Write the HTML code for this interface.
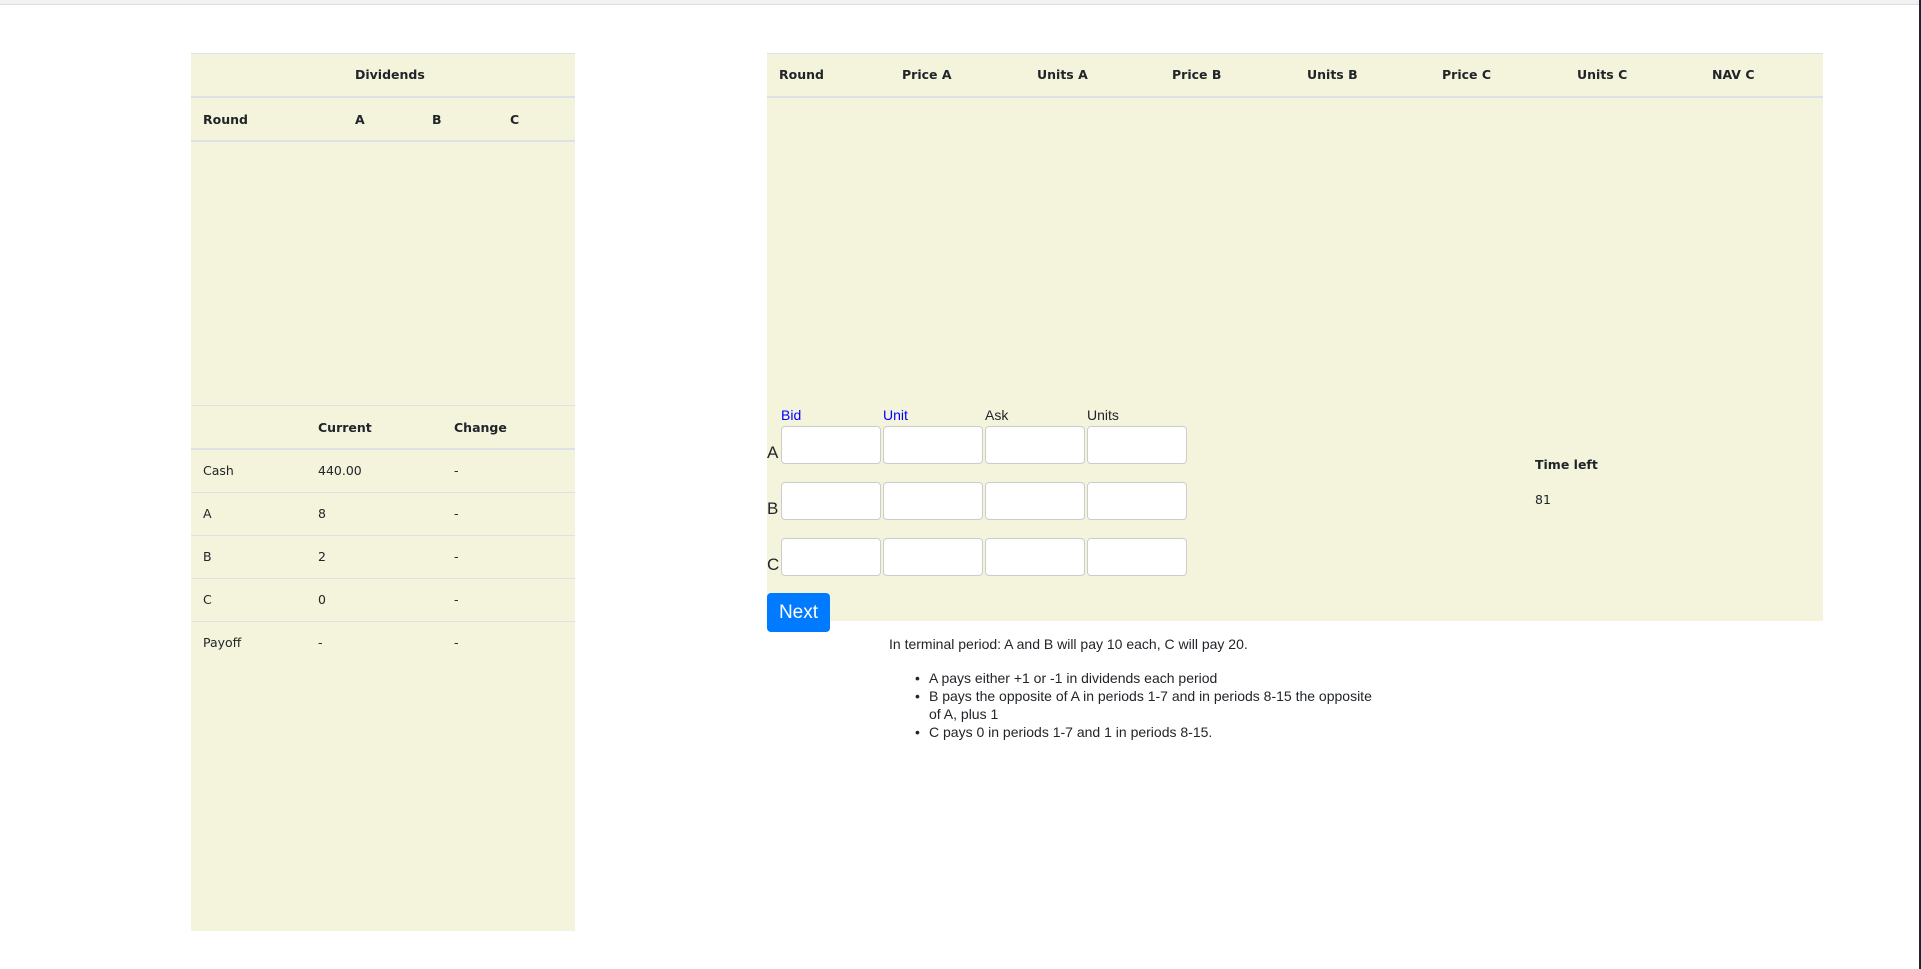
<!DOCTYPE html>
<html><head><meta charset="utf-8"><style>
*{margin:0;padding:0;box-sizing:border-box}
body{width:1921px;height:969px;position:relative;background:#fff;overflow:hidden;font-family:"DejaVu Sans","Liberation Sans",sans-serif;color:#212529}
.a{position:absolute;white-space:nowrap}
.bg{position:absolute;background:#f4f4dc}
.hl{position:absolute;height:2px;background:#dee2e6}
.tl{position:absolute;height:1px;background:#dee2e6}
.b{font-weight:bold;font-size:12.5px}
.t{font-size:12.5px}
.in{position:absolute;width:100px;height:38px;background:#fff;border:1px solid #ccc;border-radius:4px}
.lab{font-family:"Liberation Sans",sans-serif;font-size:14px}
.txt{font-family:"Liberation Sans",sans-serif;font-size:14px}
</style></head><body>
<div class="a" style="left:0;top:0;width:1921px;height:5px;background:#f2f2f2;border-bottom:1px solid #ddd"></div>
<div class="a" style="left:1919px;top:0;width:2px;height:969px;background:#1c2733"></div>

<div class="bg" style="left:191px;top:53px;width:384px;height:878px"></div>
<div class="tl" style="left:191px;top:53px;width:384px"></div>
<div class="a b" style="left:355px;top:67px">Dividends</div>
<div class="hl" style="left:191px;top:96px;width:384px"></div>
<div class="a b" style="left:203px;top:112px">Round</div>
<div class="a b" style="left:355px;top:112px">A</div>
<div class="a b" style="left:432px;top:112px">B</div>
<div class="a b" style="left:510px;top:112px">C</div>
<div class="hl" style="left:191px;top:140px;width:384px"></div>
<div class="tl" style="left:191px;top:405px;width:384px"></div>
<div class="a b" style="left:318px;top:420px">Current</div>
<div class="a b" style="left:454px;top:420px">Change</div>
<div class="hl" style="left:191px;top:448px;width:384px"></div>
<div class="a t" style="left:203px;top:463px">Cash</div><div class="a t" style="left:318px;top:463px">440.00</div><div class="a t" style="left:454px;top:463px">-</div>
<div class="tl" style="left:191px;top:492px;width:384px"></div>
<div class="a t" style="left:203px;top:506px">A</div><div class="a t" style="left:318px;top:506px">8</div><div class="a t" style="left:454px;top:506px">-</div>
<div class="tl" style="left:191px;top:535px;width:384px"></div>
<div class="a t" style="left:203px;top:549px">B</div><div class="a t" style="left:318px;top:549px">2</div><div class="a t" style="left:454px;top:549px">-</div>
<div class="tl" style="left:191px;top:578px;width:384px"></div>
<div class="a t" style="left:203px;top:592px">C</div><div class="a t" style="left:318px;top:592px">0</div><div class="a t" style="left:454px;top:592px">-</div>
<div class="tl" style="left:191px;top:621px;width:384px"></div>
<div class="a t" style="left:203px;top:635px">Payoff</div><div class="a t" style="left:318px;top:635px">-</div><div class="a t" style="left:454px;top:635px">-</div>

<div class="bg" style="left:767px;top:53px;width:1056px;height:568px"></div>
<div class="tl" style="left:767px;top:53px;width:1056px"></div>
<div class="a b" style="left:779px;top:67px">Round</div>
<div class="a b" style="left:902px;top:67px">Price A</div>
<div class="a b" style="left:1037px;top:67px">Units A</div>
<div class="a b" style="left:1172px;top:67px">Price B</div>
<div class="a b" style="left:1307px;top:67px">Units B</div>
<div class="a b" style="left:1442px;top:67px">Price C</div>
<div class="a b" style="left:1577px;top:67px">Units C</div>
<div class="a b" style="left:1712px;top:67px">NAV C</div>
<div class="hl" style="left:767px;top:96px;width:1056px"></div>

<div class="a lab" style="left:781px;top:407px;color:#00f">Bid</div>
<div class="a lab" style="left:883px;top:407px;color:#00f">Unit</div>
<div class="a lab" style="left:985px;top:407px">Ask</div>
<div class="a lab" style="left:1087px;top:407px">Units</div>
<div class="a" style="left:767px;top:443px;font-family:'Liberation Sans',sans-serif;font-size:17px">A</div>
<div class="a" style="left:767px;top:499px;font-family:'Liberation Sans',sans-serif;font-size:17px">B</div>
<div class="a" style="left:767px;top:555px;font-family:'Liberation Sans',sans-serif;font-size:17px">C</div>
<div class="in" style="left:781px;top:426px"></div><div class="in" style="left:883px;top:426px"></div><div class="in" style="left:985px;top:426px"></div><div class="in" style="left:1087px;top:426px"></div>
<div class="in" style="left:781px;top:482px"></div><div class="in" style="left:883px;top:482px"></div><div class="in" style="left:985px;top:482px"></div><div class="in" style="left:1087px;top:482px"></div>
<div class="in" style="left:781px;top:538px"></div><div class="in" style="left:883px;top:538px"></div><div class="in" style="left:985px;top:538px"></div><div class="in" style="left:1087px;top:538px"></div>
<div class="a" style="left:767px;top:593px;width:63px;height:39px;background:#007bff;border-radius:4px;color:#fff;font-family:'Liberation Sans',sans-serif;font-size:19px;line-height:39px;text-align:center">Next</div>

<div class="a b" style="left:1535px;top:457px">Time left</div>
<div class="a t" style="left:1535px;top:492px">81</div>

<div class="a txt" style="left:889px;top:636px">In terminal period: A and B will pay 10 each, C will pay 20.</div>
<div class="a txt" style="left:915px;top:670px">•</div><div class="a txt" style="left:929px;top:670px">A pays either +1 or -1 in dividends each period</div>
<div class="a txt" style="left:915px;top:688px">•</div><div class="a txt" style="left:929px;top:688px">B pays the opposite of A in periods 1-7 and in periods 8-15 the opposite</div>
<div class="a txt" style="left:929px;top:706px">of A, plus 1</div>
<div class="a txt" style="left:915px;top:724px">•</div><div class="a txt" style="left:929px;top:724px">C pays 0 in periods 1-7 and 1 in periods 8-15.</div>
</body></html>
